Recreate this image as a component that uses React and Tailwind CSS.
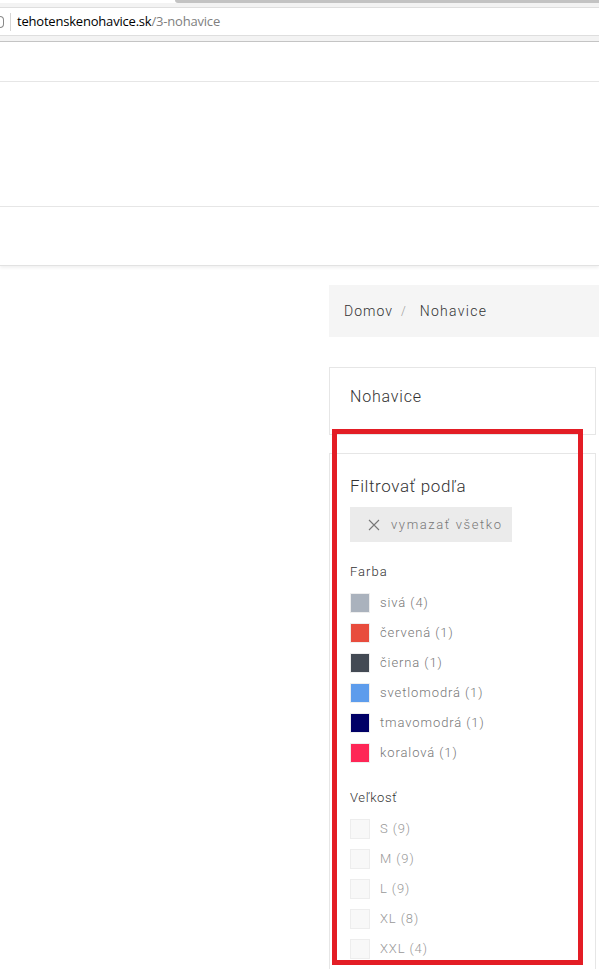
import React from "react";

const colors = [
  { name: "sivá", count: 4, hex: "bg-[#aab2bd]" },
  { name: "červená", count: 1, hex: "bg-[#e84c3d]" },
  { name: "čierna", count: 1, hex: "bg-[#434a54]" },
  { name: "svetlomodrá", count: 1, hex: "bg-[#5d9cec]" },
  { name: "tmavomodrá", count: 1, hex: "bg-[#000066]" },
  { name: "koralová", count: 1, hex: "bg-[#fe2656]" },
];

const sizes = [
  { name: "S", count: 9 },
  { name: "M", count: 9 },
  { name: "L", count: 9 },
  { name: "XL", count: 8 },
  { name: "XXL", count: 4 },
];

const App = () => {
  return (
    <div className="relative w-[599px] h-[969px] overflow-hidden bg-white font-['Roboto',Arial,sans-serif] font-light">
      {/* Browser chrome */}
      <div className="flex h-[3px]">
        <div className="w-[175px] bg-white" />
        <div className="flex-1 bg-[#c3c3c3] rounded-bl-[6px]" />
      </div>
      <div className="h-[5px] bg-[#f3f3f3] border-b border-[#dedede]" />
      <div className="h-[28px] flex items-center bg-white border-b border-[#dedede] font-normal">
        <div className="w-[4px] h-[12px] border border-[#888] border-l-0 rounded-r-full" />
        <div className="ml-[6px] w-px h-[18px] bg-[#d6d6d6]" />
        <div className="ml-[6px] text-[13px] font-['Open_Sans',sans-serif] tracking-[-0.2px]">
          <span className="text-black">tehotenskenohavice.sk</span>
          <span className="text-[#808080]">/3-nohavice</span>
        </div>
      </div>
      <div className="h-[5px] bg-[#f3f3f3]" />
      <div className="h-[1px] bg-[#c4c4c4]" />

      {/* Page header */}
      <div className="h-[40px] border-b border-[#e6e6e6]" />
      <div className="h-[125px] border-b border-[#e6e6e6]" />
      <div className="h-[59px] border-b border-[#e2e2e2] shadow-[0_2px_3px_rgba(0,0,0,0.06)]" />

      {/* Content */}
      <div className="flex mt-[19px]">
        <div className="w-[329px] shrink-0" />
        <div className="flex-1">
          <div className="h-[52px] bg-[#f5f5f5] flex items-center px-[15px] text-[14px] tracking-[1px] text-[#333]">
            <span>Domov</span>
            <span className="ml-[8px] mr-[13px] text-[#999] text-[12px]">/</span>
            <span className="tracking-[1.3px]">Nohavice</span>
          </div>

          <div className="mt-[30px] mr-[3px] h-[68px] border border-[#e6e6e6] px-[20px] pt-[17px] text-[16px] leading-[24px] tracking-[0.8px] text-[#333]">
            Nohavice
          </div>

          <div className="mt-[18px] mr-[3px] border border-[#e6e6e6] px-[20px] pt-[20px] pb-[20px]">
            <div className="text-[17px] leading-[24px] tracking-[0.6px] text-[#333]">
              Filtrovať podľa
            </div>
            <button className="mt-[9px] w-[162px] h-[35px] bg-[#ebebeb] flex items-center pl-[18px] text-[13px] tracking-[1.6px] text-[#777]">
              <svg width="12" height="12" viewBox="0 0 12 12" className="mr-[11px]">
                <path d="M1 1 L11 11 M11 1 L1 11" stroke="#777" strokeWidth="1.1" fill="none" />
              </svg>
              vymazať všetko
            </button>

            <div className="mt-[20px] text-[13px] leading-[20px] tracking-[1px] text-[#333]">
              Farba
            </div>
            <div className="mt-[6px] flex flex-col">
              {colors.map((c) => (
                <div key={c.name} className="h-[30px] flex items-center">
                  <div className={`w-[20px] h-[20px] border border-[#eeeeee] ${c.hex}`} />
                  <span className="ml-[10px] text-[13px] tracking-[0.9px] text-[#777]">
                    {c.name} ({c.count})
                  </span>
                </div>
              ))}
            </div>

            <div className="mt-[20px] text-[13px] leading-[20px] tracking-[0.6px] text-[#333]">
              Veľkosť
            </div>
            <div className="mt-[6px] flex flex-col">
              {sizes.map((s) => (
                <div key={s.name} className="h-[30px] flex items-center">
                  <div className="w-[20px] h-[20px] border border-[#ededed] bg-[#f8f8f8]" />
                  <span className="ml-[10px] text-[13px] tracking-[0.9px] text-[#999]">
                    {s.name} ({s.count})
                  </span>
                </div>
              ))}
            </div>
          </div>
        </div>
      </div>

      {/* Red annotation box */}
      <div className="absolute left-[332px] top-[429px] w-[251px] h-[536px] border-[5px] border-[#e31d25] pointer-events-none" />
    </div>
  );
};

export default App;
